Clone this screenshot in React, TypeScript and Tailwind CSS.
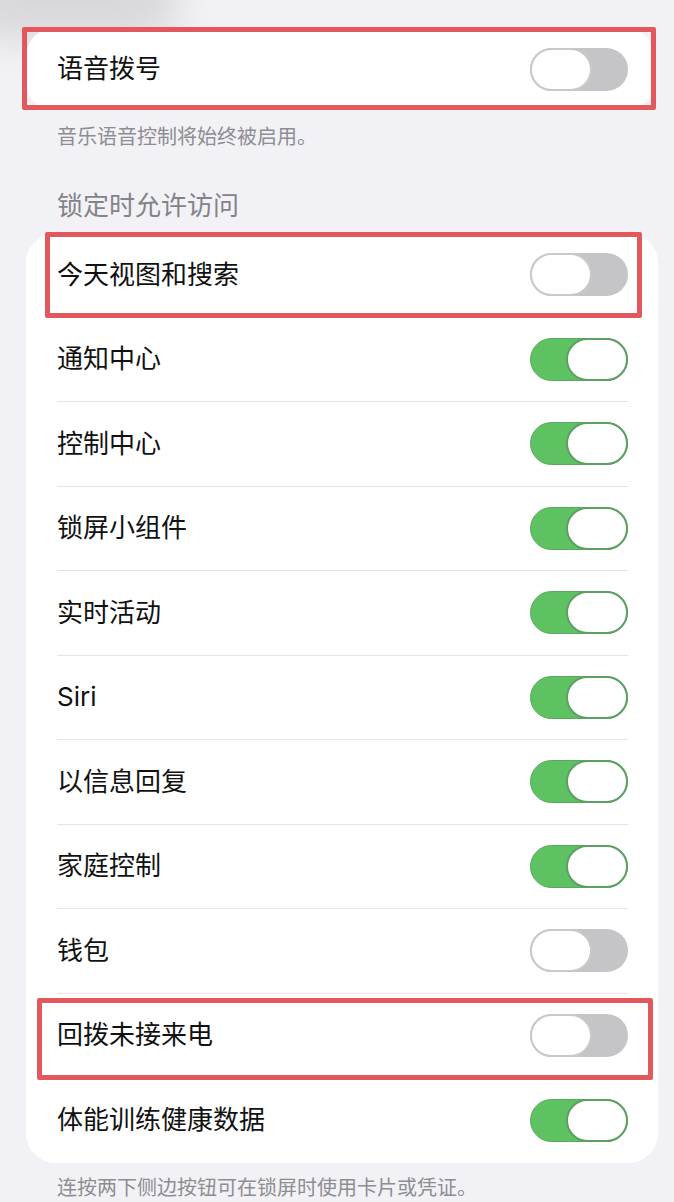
import React from "react";

const FONT = { fontFamily: 'Inter, "Noto Sans CJK SC", "Noto Sans", sans-serif' };

function Toggle({ on }: { on: boolean }) {
  if (on) {
    return (
      <div className="relative w-[98px] h-[43px] rounded-full bg-[#5fc262] border border-[#58a95c] shrink-0">
        <div className="absolute right-[-1px] top-[-1px] w-[62px] h-[43px] rounded-full bg-white border-[2px] border-[#5e9f62]" />
      </div>
    );
  }
  return (
    <div className="relative w-[98px] h-[43px] rounded-full bg-[#c5c5c7] shrink-0">
      <div className="absolute left-0 top-0 w-[62px] h-[43px] rounded-full bg-white border-[2px] border-[#c9c9cb]" />
    </div>
  );
}

const rows: { label: string; on: boolean }[] = [
  { label: "今天视图和搜索", on: false },
  { label: "通知中心", on: true },
  { label: "控制中心", on: true },
  { label: "锁屏小组件", on: true },
  { label: "实时活动", on: true },
  { label: "Siri", on: true },
  { label: "以信息回复", on: true },
  { label: "家庭控制", on: true },
  { label: "钱包", on: false },
  { label: "回拨未接来电", on: false },
  { label: "体能训练健康数据", on: true },
];

export default function App() {
  return (
    <div className="relative w-[674px] h-[1202px] overflow-hidden bg-[#f2f2f6]" style={FONT}>
      <div className="pointer-events-none absolute -left-[40px] -top-[40px] w-[220px] h-[80px] rounded-full bg-[#c8c8cc] opacity-60 blur-[18px]" />
      <div className="relative flex flex-col">
        {/* Top card */}
        <div className="relative mt-[28px] ml-[26px] mr-[20px] h-[82px] rounded-[28px] bg-white flex items-center justify-between pl-[31px] pr-[26px]">
          <span className="text-[26px] leading-[36px] text-[#111]">语音拨号</span>
          <Toggle on={false} />
          <div className="absolute left-[-4px] top-[-1px] w-[634px] h-[83px] border-[5px] border-[#e2585c] rounded-[2px]" />
        </div>
        <div className="mt-[13px] pl-[57px] text-[20px] leading-[28px] text-[#8d8d92]">音乐语音控制将始终被启用。</div>
        <div className="mt-[37px] pl-[57px] text-[26px] leading-[36px] text-[#838388]">锁定时允许访问</div>
        {/* Main card */}
        <div className="relative mt-[9px] ml-[26px] mr-[16px] rounded-[30px] bg-white pl-[31px] pr-[30px]">
          {rows.map((r, i) => (
            <div
              key={r.label}
              className={
                "h-[84.5px] flex items-center justify-between " +
                (i < rows.length - 1 ? "border-b border-[#e4e4e8]" : "")
              }
            >
              <span className="text-[26px] leading-[36px] text-[#111]">{r.label}</span>
              <Toggle on={r.on} />
            </div>
          ))}
          <div className="absolute left-[19px] top-[-1px] w-[597px] h-[86px] border-[5px] border-[#e2585c] rounded-[2px]" />
          <div className="absolute left-[11px] top-[765px] w-[616px] h-[82px] border-[5px] border-[#e2585c] rounded-[2px]" />
        </div>
        <div className="mt-[11px] pl-[57px] text-[20px] leading-[28px] text-[#8d8d92]">连按两下侧边按钮可在锁屏时使用卡片或凭证。</div>
      </div>
    </div>
  );
}
